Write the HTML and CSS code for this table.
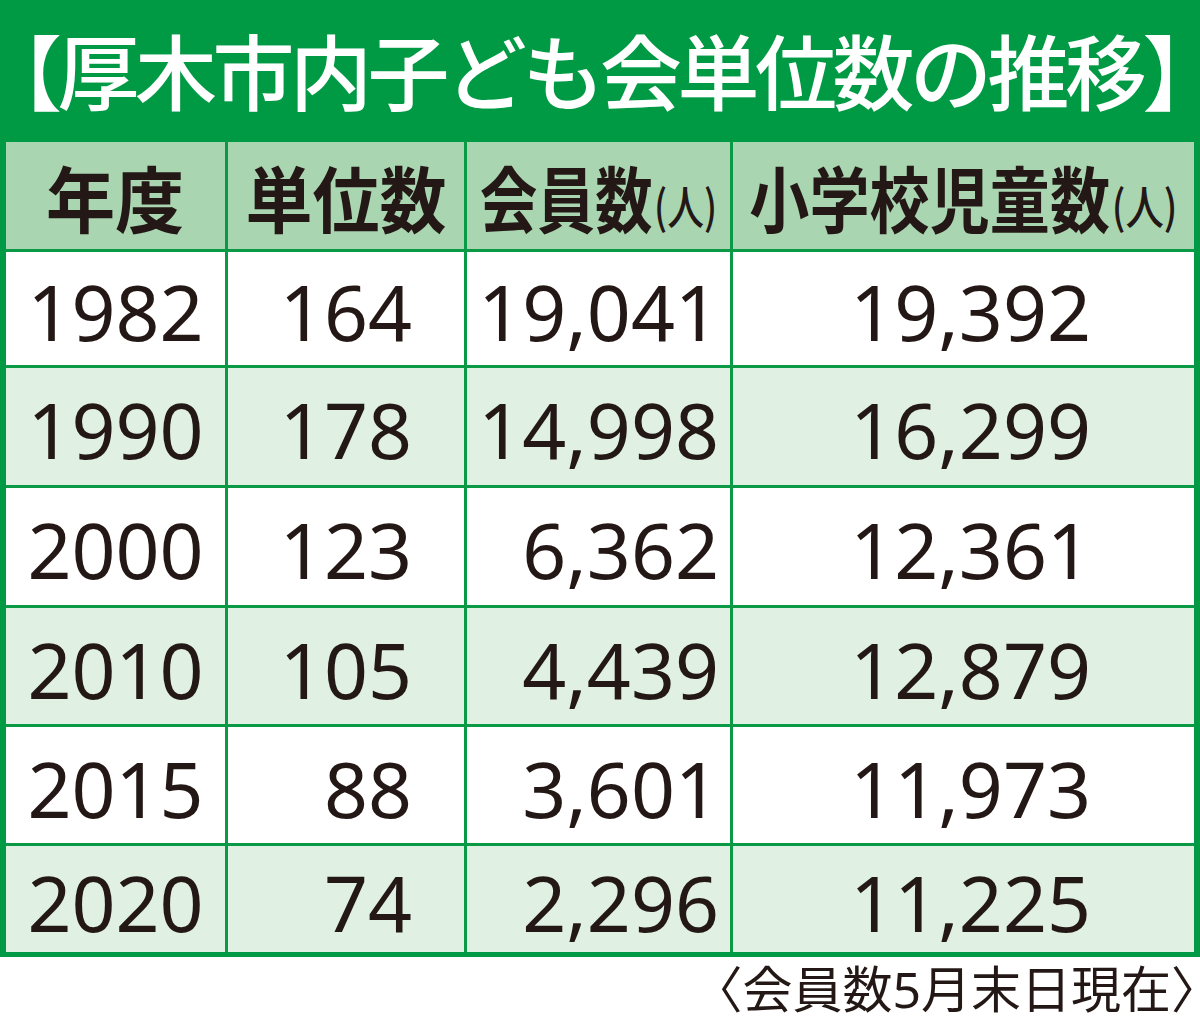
FILE: index.html
```html
<!DOCTYPE html>
<html lang="ja">
<head>
    <meta charset="UTF-8">
    <meta name="viewport" content="width=device-width, initial-scale=1.0">
    <title>厚木市内子ども会単位数の推移</title>
    <link rel="stylesheet" href="styles.css">
</head>
<body>
    <main class="panel">
        <h1 class="title"><span class="half">【</span>厚木市内子ども会単位数の推移<span class="half">】</span></h1>
        <div class="grid">
            <!-- header -->
            <div class="cell head"><span class="hd s1">年度</span></div>
            <div class="cell head"><span class="hd s2">単位数</span></div>
            <div class="cell head"><span class="hd s3">会員数<span class="unit">(人)</span></span></div>
            <div class="cell head"><span class="hd s4">小学校児童数<span class="unit">(人)</span></span></div>

            <div class="cell c1">1982</div>
            <div class="cell c2">164</div>
            <div class="cell c3">19,041</div>
            <div class="cell c4">19,392</div>

            <div class="cell c1 alt">1990</div>
            <div class="cell c2 alt">178</div>
            <div class="cell c3 alt">14,998</div>
            <div class="cell c4 alt">16,299</div>

            <div class="cell c1">2000</div>
            <div class="cell c2">123</div>
            <div class="cell c3">6,362</div>
            <div class="cell c4">12,361</div>

            <div class="cell c1 alt">2010</div>
            <div class="cell c2 alt">105</div>
            <div class="cell c3 alt">4,439</div>
            <div class="cell c4 alt">12,879</div>

            <div class="cell c1">2015</div>
            <div class="cell c2">88</div>
            <div class="cell c3">3,601</div>
            <div class="cell c4">11,973</div>

            <div class="cell c1 alt">2020</div>
            <div class="cell c2 alt">74</div>
            <div class="cell c3 alt">2,296</div>
            <div class="cell c4 alt">11,225</div>
        </div>
    </main>
    <p class="note"><span class="half">〈</span>会員数5月末日現在<span class="half">〉</span></p>
</body>
</html>
```

FILE: styles.css
```css
body {
    margin: 0;
    width: 1200px;
    background-color: #fff;
    color: #231815;
    font-family: "Noto Sans", "Noto Sans CJK JP", sans-serif;
}

.panel {
    background-color: #009944;
    padding: 0 6px 5px 6px;
}

.title {
    margin: 0;
    height: 142px;
    color: #fff;
    font-family: "Noto Sans CJK JP", sans-serif;
    font-size: 82px;
    font-weight: 500;
    letter-spacing: -4.5px;
    line-height: 138px;
    text-align: center;
    white-space: nowrap;
}

.half {
    font-feature-settings: "halt";
}

.grid {
    display: grid;
    grid-template-columns: 219px 236px 263px minmax(0, 1fr);
    grid-template-rows: 107px 113px 117px 117px 116px 116px 106px;
    gap: 3px;
    background-color: #0a9a45;
}

.cell {
    background-color: #fff;
    display: flex;
    align-items: center;
    font-size: 77px;
    line-height: 1;
    padding-top: 6px;
    box-sizing: border-box;
    min-width: 0;
}

.alt {
    background-color: #e0f0e3;
}

.head {
    background-color: #a9d5b1;
    justify-content: center;
    font-family: "Noto Sans CJK JP", sans-serif;
    font-weight: 700;
    font-size: 72px;
    padding-top: 0;
}

.hd {
    display: inline-block;
    flex-shrink: 0;
    white-space: nowrap;
    transform-origin: center;
}

.s1 {
    transform: scaleX(0.96);
}

.s2 {
    transform: scaleX(0.93);
}

.s3 {
    transform: scaleX(0.8);
}

.s4 {
    transform: scaleX(0.835);
}

.unit {
    font-size: 46px;
    font-weight: 500;
    margin-left: 2px;
    vertical-align: 3px;
}

.c1 {
    justify-content: center;
}

.c2 {
    justify-content: flex-end;
    padding-right: 52px;
}

.c3 {
    justify-content: flex-end;
    padding-right: 11px;
}

.c4 {
    justify-content: flex-end;
    padding-right: 103px;
}

.note {
    margin: 2px 4px 0 0;
    text-align: right;
    font-family: "Noto Sans", "Noto Sans CJK JP", sans-serif;
    font-size: 50px;
    line-height: 60px;
}
```
